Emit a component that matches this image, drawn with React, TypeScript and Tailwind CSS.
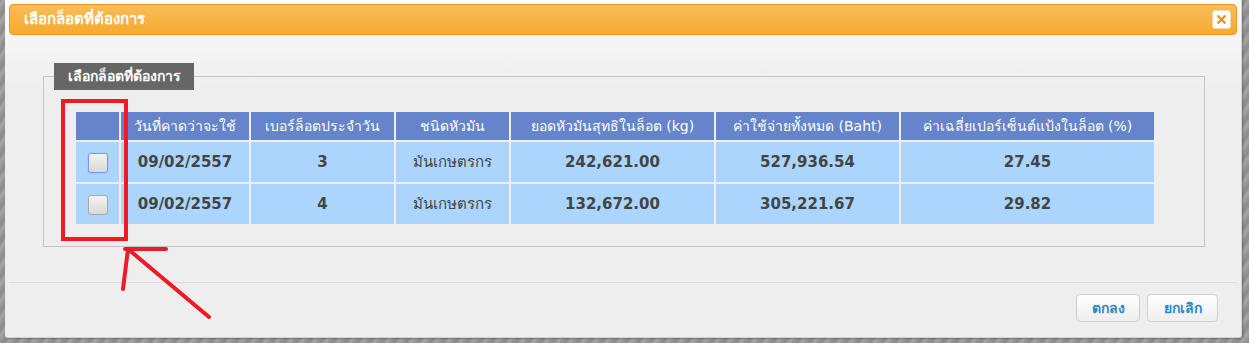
import { X } from "lucide-react";

interface LotRow {
  date: string;
  lotNo: string;
  kind: string;
  netWeight: string;
  cost: string;
  starch: string;
  focused?: boolean;
}

const rows: LotRow[] = [
  {
    date: "09/02/2557",
    lotNo: "3",
    kind: "มันเกษตรกร",
    netWeight: "242,621.00",
    cost: "527,936.54",
    starch: "27.45",
    focused: true,
  },
  {
    date: "09/02/2557",
    lotNo: "4",
    kind: "มันเกษตรกร",
    netWeight: "132,672.00",
    cost: "305,221.67",
    starch: "29.82",
  },
];

const headers = [
  { label: "วันที่คาดว่าจะใช้", w: "w-[128px]" },
  { label: "เบอร์ล็อตประจำวัน", w: "w-[143px]" },
  { label: "ชนิดหัวมัน", w: "w-[113px]" },
  { label: "ยอดหัวมันสุทธิในล็อต (kg)", w: "w-[203px]" },
  { label: "ค่าใช้จ่ายทั้งหมด (Baht)", w: "w-[183px]" },
  { label: "ค่าเฉลี่ยเปอร์เซ็นต์แป้งในล็อต (%)", w: "w-[253px]" },
];

function FakeCheckbox({ focused }: { focused?: boolean }) {
  return (
    <span
      className={
        "inline-block w-[20px] h-[20px] rounded-[3px] border bg-gradient-to-b from-[#f3f3f3] to-[#d9d9d9] align-middle " +
        (focused
          ? "border-[#6b9ef0] shadow-[0_0_0_1px_#a9c8f7]"
          : "border-[#a8a8a8]")
      }
    />
  );
}

function DialogButton({ children, className }: { children: string; className: string }) {
  return (
    <button
      className={`${className} h-[28px] rounded-[4px] border border-[#cfcfcf] bg-gradient-to-b from-[#ffffff] to-[#eeeeee] text-[14px] font-bold text-[#2b8ac6] leading-none`}
    >
      {children}
    </button>
  );
}

export default function App() {
  return (
    <div
      className="relative w-[1249px] h-[343px] overflow-hidden bg-[repeating-linear-gradient(125deg,#8f8f8f_0px,#a6a6a6_3px,#939393_7px,#8a8a8a_10px)]"
      style={{ fontFamily: '"DejaVu Sans", Tahoma, sans-serif' }}
    >
      {/* Dialog */}
      <div className="ml-[5px] w-[1237px] h-[338px] flex flex-col bg-[linear-gradient(#fcfcfc,#eeeeee_90px)] border-r border-b border-[#d4d4d4] rounded-b-[3px] shadow-[1px_1px_2px_rgba(0,0,0,0.25)]">
        {/* Title bar */}
        <div className="mx-[4px] mt-[4px] h-[31px] flex items-center justify-between rounded-[4px] border border-[#ea981f] bg-gradient-to-b from-[#f9bd58] to-[#f6aa2d] pl-[14px] pr-[5px]">
          <span className="text-[15px] font-bold text-white">เลือกล็อตที่ต้องการ</span>
          <span className="flex items-center justify-center w-[19px] h-[19px] rounded-[3px] bg-white border border-[#f3d7a8]">
            <X className="w-[13px] h-[13px] text-[#ef8e12]" strokeWidth={4.5} />
          </span>
        </div>

        {/* Body */}
        <div className="pl-[38px] pt-[28px]">
          <fieldset className="w-[1162px] border border-[#c4c4c4] pl-[10px] pb-[20px]">
            <legend className="h-[27px] w-[140px] flex items-center justify-center bg-[#666666] text-[14px] font-bold text-white">
              เลือกล็อตที่ต้องการ
            </legend>
            <table className="ml-[20px] mt-[20px] border-separate border-spacing-[2px] bg-[#eeeeee]">
              <thead>
                <tr className="h-[28px]">
                  <th className="w-[43px] bg-[#6584c9]" />
                  {headers.map((h) => (
                    <th
                      key={h.label}
                      className={`${h.w} bg-[#6584c9] text-[14px] font-normal text-white text-center whitespace-nowrap p-0`}
                    >
                      {h.label}
                    </th>
                  ))}
                </tr>
              </thead>
              <tbody>
                {rows.map((r) => (
                  <tr key={r.lotNo} className="h-[40px] bg-[#abd5fd] text-[#444444]">
                    <td className="text-center p-0">
                      <FakeCheckbox focused={r.focused} />
                    </td>
                    <td className="text-center text-[15px] font-bold p-0">{r.date}</td>
                    <td className="text-center text-[15px] font-bold p-0">{r.lotNo}</td>
                    <td className="text-center text-[15px] p-0">{r.kind}</td>
                    <td className="text-center text-[15px] font-bold p-0">{r.netWeight}</td>
                    <td className="text-center text-[15px] font-bold p-0">{r.cost}</td>
                    <td className="text-center text-[15px] font-bold p-0">{r.starch}</td>
                  </tr>
                ))}
              </tbody>
            </table>
          </fieldset>
        </div>

        {/* Footer */}
        <div className="mt-[35px] mx-[4px] border-t border-[#dcdcdc] pt-[11px] pr-[19px] flex justify-end gap-[7px]">
          <DialogButton className="w-[64px]">ตกลง</DialogButton>
          <DialogButton className="w-[71px]">ยกเลิก</DialogButton>
        </div>
      </div>

      {/* Red annotation drawn on top of the screenshot */}
      <svg
        className="absolute inset-0 pointer-events-none"
        width="1249"
        height="343"
        viewBox="0 0 1249 343"
      >
        <rect x="63" y="101" width="63" height="138" fill="none" stroke="#ed1c24" strokeWidth="4" />
        <g stroke="#ed1c24" strokeWidth="4" strokeLinecap="round" fill="none">
          <line x1="128" y1="249" x2="209" y2="317" />
          <line x1="125" y1="249" x2="166" y2="249" />
          <line x1="128" y1="249" x2="123" y2="289" />
        </g>
      </svg>
    </div>
  );
}
